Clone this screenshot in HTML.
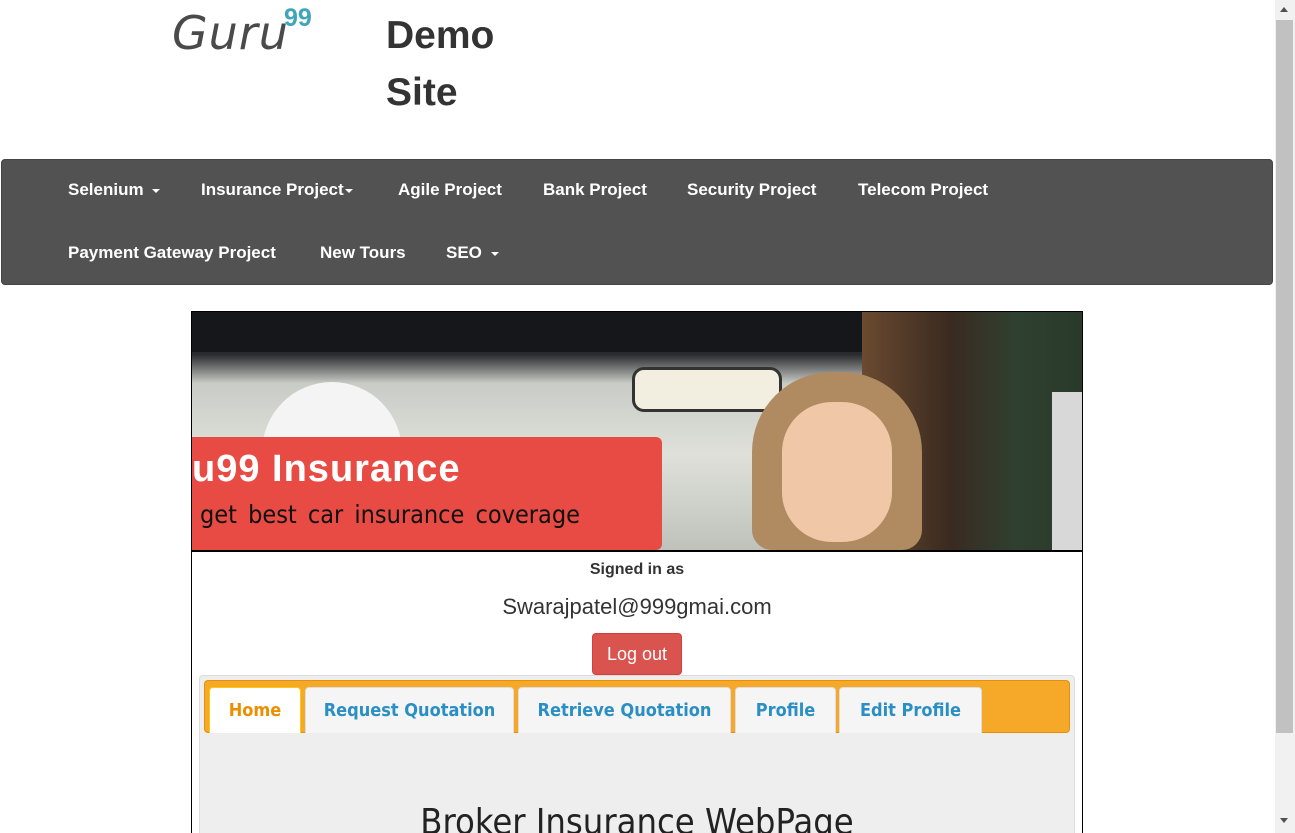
<!DOCTYPE html>
<html><head><meta charset="utf-8"><style>
*{margin:0;padding:0;box-sizing:border-box}
html,body{width:1295px;height:833px;overflow:hidden}
body{background:#fff;font-family:"Liberation Sans",Arial,sans-serif;position:relative;color:#333}
.a{position:absolute}
.nav{left:1px;top:159px;width:1272px;height:126px;background:#525252;border-radius:4px;border:1px solid #444}
.nl{position:absolute;color:#fff;font-weight:bold;font-size:17px;white-space:nowrap}
.car{display:inline-block;width:0;height:0;border-left:4px solid transparent;border-right:4px solid transparent;border-top:4px solid #fff;vertical-align:middle;margin-left:4px}
.tab{position:absolute;top:687px;height:46px;background:#f5f5f5;border:1px solid #ddd;border-bottom:none;border-radius:4px 4px 0 0;font-family:"DejaVu Sans Condensed","DejaVu Sans",sans-serif;font-weight:bold;font-size:18px;color:#2a8fc4;text-align:center;line-height:46px}
</style></head><body>
<div class="a" style="left:172px;top:6px;font-family:'DejaVu Sans',sans-serif;font-size:46px;color:#4a4a4a;font-style:italic;letter-spacing:1px">Guru</div>
<div class="a" style="left:284px;top:4px;font-size:25px;font-weight:bold;color:#3fa5bb">99</div>
<div class="a" style="left:386px;top:7px;font-size:39px;font-weight:bold;line-height:57px;color:#333">Demo<br>Site</div>
<div class="a nav"></div>
<div class="nl" style="left:68px;top:180px">Selenium <span class="car"></span></div>
<div class="nl" style="left:201px;top:180px">Insurance Project<span class="car" style="margin-left:1px"></span></div>
<div class="nl" style="left:398px;top:180px">Agile Project</div>
<div class="nl" style="left:543px;top:180px">Bank Project</div>
<div class="nl" style="left:687px;top:180px">Security Project</div>
<div class="nl" style="left:858px;top:180px">Telecom Project</div>
<div class="nl" style="left:68px;top:243px">Payment Gateway Project</div>
<div class="nl" style="left:320px;top:243px">New Tours</div>
<div class="nl" style="left:446px;top:243px">SEO <span class="car"></span></div>

<div class="a" style="left:191px;top:311px;width:892px;height:530px;border:1px solid #000"></div>
<div class="a" style="left:192px;top:312px;width:890px;height:238px;overflow:hidden;background:linear-gradient(180deg,#1a1c20 0,#2a2c30 18%,#c9ccc6 30%,#dfe0da 60%,#bfc2bb 100%)">
 <div class="a" style="left:0;top:0;width:890px;height:40px;background:#15171a"></div>
 <div class="a" style="left:440px;top:55px;width:150px;height:45px;background:#f2eee0;border:3px solid #333;border-radius:12px"></div>
 <div class="a" style="left:70px;top:70px;width:140px;height:170px;background:#f4f4f4;border-radius:70px 70px 0 0"></div>
 <div class="a" style="left:670px;top:0;width:220px;height:238px;background:linear-gradient(90deg,#6b4a30,#3a2a20 40%,#2f4030 70%,#2a3a2a)"></div>
 <div class="a" style="left:860px;top:80px;width:30px;height:158px;background:#d8d8d8"></div>
 <div class="a" style="left:560px;top:60px;width:170px;height:178px;background:#b08a60;border-radius:80px 80px 20px 20px"></div>
 <div class="a" style="left:590px;top:90px;width:110px;height:140px;background:#f0c8a8;border-radius:50px"></div>
 <div class="a" style="left:0;top:125px;width:470px;height:113px;background:#e84b43;border-radius:0 6px 6px 0"></div>
 <div class="a" style="left:0;top:136px;font-size:38px;font-weight:bold;color:#fff;letter-spacing:1px">u99 Insurance</div>
 <div class="a" style="left:8px;top:188px;font-family:'DejaVu Sans Condensed','DejaVu Sans',sans-serif;font-size:25px;color:#111;word-spacing:4px">get best car insurance coverage</div>
</div>
<div class="a" style="left:192px;top:550px;width:890px;height:2px;background:#000"></div>
<div class="a" style="left:192px;top:561px;width:890px;text-align:center;font-size:16px;font-weight:bold">Signed in as</div>
<div class="a" style="left:192px;top:594px;width:890px;text-align:center;font-size:22px">Swarajpatel@999gmai.com</div>
<div class="a" style="left:592px;top:633px;width:90px;height:42px;background:#d9534f;border:1px solid #d43f3a;border-radius:4px;color:#fff;font-size:18px;text-align:center;line-height:40px">Log out</div>
<div class="a" style="left:199px;top:675px;width:876px;height:170px;background:#eee;border:1px solid #ddd;border-radius:4px"></div>
<div class="a" style="left:204px;top:680px;width:866px;height:53px;background:#f6a828;border:1px solid #e78f08;border-radius:4px"></div>
<div class="tab" style="left:209px;width:92px;background:#fff;color:#eb8f00;border-color:#fbcb09">Home</div>
<div class="tab" style="left:305px;width:209px">Request Quotation</div>
<div class="tab" style="left:518px;width:213px">Retrieve Quotation</div>
<div class="tab" style="left:735px;width:101px">Profile</div>
<div class="tab" style="left:839px;width:143px">Edit Profile</div>
<div class="a" style="left:199px;top:802px;width:876px;text-align:center;font-family:'DejaVu Sans Condensed','DejaVu Sans',sans-serif;font-size:36px;color:#222;white-space:nowrap">Broker Insurance WebPage</div>

<div class="a" style="left:1275px;top:0;width:20px;height:833px;background:#f1f1f1"></div>
<div class="a" style="left:1276px;top:20px;width:17px;height:713px;background:#c1c1c1"></div>
<div class="a" style="left:1280px;top:7px;width:0;height:0;border-left:4px solid transparent;border-right:4px solid transparent;border-bottom:5px solid #505050"></div>
<div class="a" style="left:1280px;top:818px;width:0;height:0;border-left:4px solid transparent;border-right:4px solid transparent;border-top:5px solid #505050"></div>
</body></html>
